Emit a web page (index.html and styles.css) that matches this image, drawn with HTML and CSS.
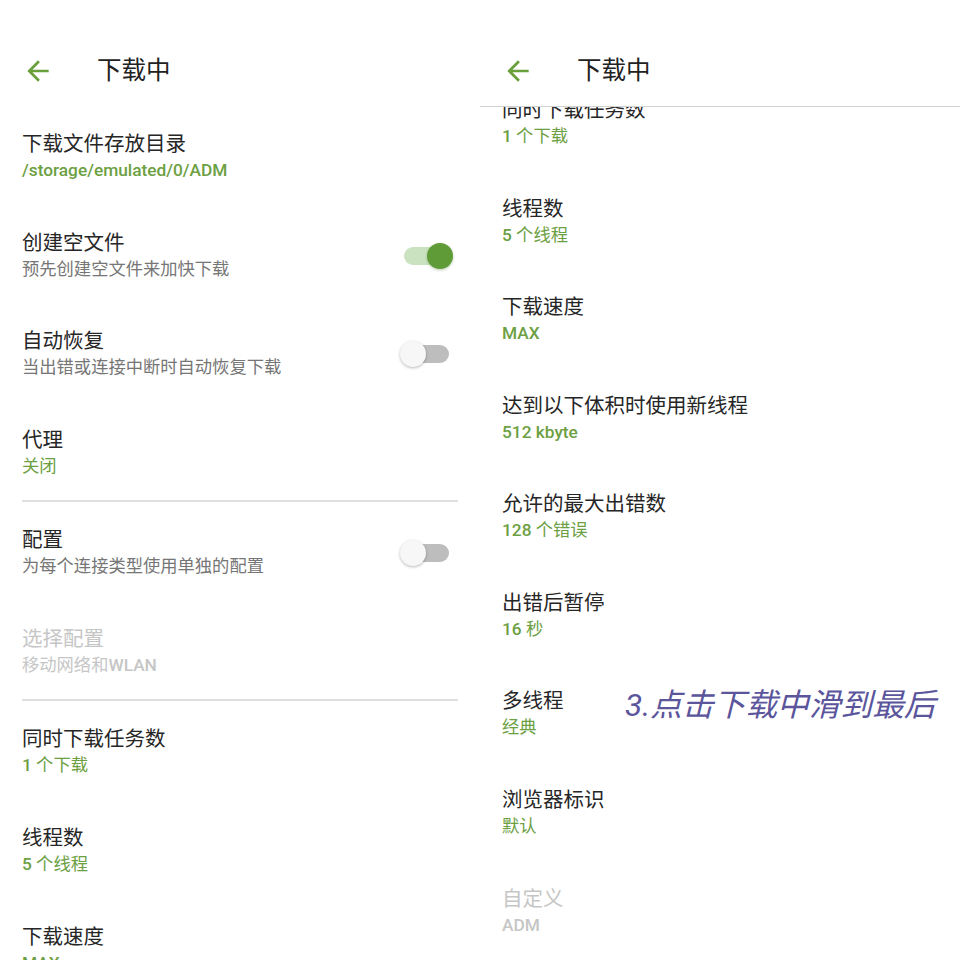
FILE: index.html
```html
<!DOCTYPE html>
<html lang="zh-CN">
<head>
<meta charset="utf-8">
<title>下载中</title>
<link rel="stylesheet" href="styles.css">
</head>
<body>
<div class="screen">
  <section class="panel">
    <header class="appbar">
      <svg class="back" viewBox="0 0 24 24"><path d="M20 11H7.83l5.59-5.59L12 4l-8 8 8 8 1.41-1.41L7.83 13H20v-2z"/></svg>
      <h1 class="title">下载中</h1>
    </header>
    <div class="list">
      <div class="item"><div class="text"><div class="t">下载文件存放目录</div><div class="v"><span class="en">/storage/emulated/0/ADM</span></div></div></div>
      <div class="item"><div class="text"><div class="t">创建空文件</div><div class="s">预先创建空文件来加快下载</div></div><div class="switch on"><span class="track"></span><span class="thumb"></span></div></div>
      <div class="item"><div class="text"><div class="t">自动恢复</div><div class="s">当出错或连接中断时自动恢复下载</div></div><div class="switch"><span class="track"></span><span class="thumb"></span></div></div>
      <div class="item"><div class="text"><div class="t">代理</div><div class="v">关闭</div></div></div>
      <div class="divider"></div>
      <div class="item"><div class="text"><div class="t">配置</div><div class="s">为每个连接类型使用单独的配置</div></div><div class="switch"><span class="track"></span><span class="thumb"></span></div></div>
      <div class="item disabled"><div class="text"><div class="t">选择配置</div><div class="v">移动网络和<span class="en">WLAN</span></div></div></div>
      <div class="divider"></div>
      <div class="item"><div class="text"><div class="t">同时下载任务数</div><div class="v"><span class="en">1</span> 个下载</div></div></div>
      <div class="item"><div class="text"><div class="t">线程数</div><div class="v"><span class="en">5</span> 个线程</div></div></div>
      <div class="item"><div class="text"><div class="t">下载速度</div><div class="v"><span class="en">MAX</span></div></div></div>
    </div>
  </section>
  <section class="panel">
    <header class="appbar lined">
      <svg class="back" viewBox="0 0 24 24"><path d="M20 11H7.83l5.59-5.59L12 4l-8 8 8 8 1.41-1.41L7.83 13H20v-2z"/></svg>
      <h1 class="title">下载中</h1>
    </header>
    <div class="list scrolled">
      <div class="inner">
        <div class="item"><div class="text"><div class="t">同时下载任务数</div><div class="v"><span class="en">1</span> 个下载</div></div></div>
        <div class="item"><div class="text"><div class="t">线程数</div><div class="v"><span class="en">5</span> 个线程</div></div></div>
        <div class="item"><div class="text"><div class="t">下载速度</div><div class="v"><span class="en">MAX</span></div></div></div>
        <div class="item"><div class="text"><div class="t">达到以下体积时使用新线程</div><div class="v"><span class="en">512 kbyte</span></div></div></div>
        <div class="item"><div class="text"><div class="t">允许的最大出错数</div><div class="v"><span class="en">128</span> 个错误</div></div></div>
        <div class="item"><div class="text"><div class="t">出错后暂停</div><div class="v"><span class="en">16</span> 秒</div></div></div>
        <div class="item"><div class="text"><div class="t">多线程</div><div class="v">经典</div></div></div>
        <div class="item"><div class="text"><div class="t">浏览器标识</div><div class="v">默认</div></div></div>
        <div class="item disabled"><div class="text"><div class="t">自定义</div><div class="v"><span class="en">ADM</span></div></div></div>
      </div>
    </div>
    <div class="note">3.点击下载中滑到最后</div>
  </section>
</div>
</body>
</html>
```
FILE: styles.css
```css
html, body {
  margin: 0;
  padding: 0;
  background: #ffffff;
  overflow: hidden;
}
body {
  font-family: "Roboto", "Noto Sans CJK SC", sans-serif;
  color: #222222;
}
.screen {
  display: flex;
  width: 960px;
  height: 960px;
  overflow: hidden;
}
.panel {
  position: relative;
  width: 480px;
  height: 960px;
  display: flex;
  flex-direction: column;
  overflow: hidden;
}
.appbar {
  box-sizing: border-box;
  height: 106px;
  flex: none;
  display: flex;
  align-items: center;
  padding: 35px 0 0 22px;
}
.appbar.lined {
  height: 107px;
  padding-top: 36px;
  border-bottom: 1px solid #d2d2d2;
}
.back {
  width: 32px;
  height: 32px;
  fill: #69a03c;
  flex: none;
}
.title {
  margin: 0 0 0 43px;
  font-size: 24.5px;
  font-weight: 400;
  color: #222222;
  line-height: 32px;
}
.list {
  flex: 1;
  overflow: hidden;
}
.scrolled .inner {
  margin-top: -35px;
}
.item {
  box-sizing: border-box;
  height: 98.57px;
  display: flex;
  align-items: flex-start;
  padding: 25px 27px 0 22px;
}
.text {
  flex: 1;
}
.t {
  font-size: 20.5px;
  line-height: 26px;
  color: #262626;
  white-space: nowrap;
}
.s {
  font-size: 17.3px;
  line-height: 26px;
  color: #767676;
  white-space: nowrap;
}
.v {
  font-size: 17.3px;
  line-height: 26px;
  color: #6ca042;
  white-space: nowrap;
}
.v .en {
  font-weight: 500;
}
.disabled .t,
.disabled .v {
  color: #c6c6c6;
}
.divider {
  height: 2px;
  margin: 0 22px;
  background: #e0e0e0;
}
.switch {
  position: relative;
  width: 53px;
  height: 26px;
  margin-top: 13px;
  flex: none;
}
.track {
  position: absolute;
  left: 4px;
  right: 4px;
  top: 4px;
  height: 18px;
  border-radius: 9px;
  background: #bdbdbd;
}
.thumb {
  position: absolute;
  left: 0;
  top: 0;
  width: 26px;
  height: 26px;
  border-radius: 50%;
  background: #f7f7f7;
  box-shadow: 0 1px 3px rgba(0, 0, 0, 0.28);
}
.switch.on .track {
  background: #cbe2c1;
}
.switch.on .thumb {
  left: auto;
  right: 0;
  background: #5f9c37;
  box-shadow: 0 1px 3px rgba(60, 110, 30, 0.35);
}
.note {
  position: absolute;
  left: 145px;
  top: 686px;
  font-size: 31.7px;
  line-height: 40px;
  font-style: italic;
  color: #5b559c;
  white-space: nowrap;
}
```
